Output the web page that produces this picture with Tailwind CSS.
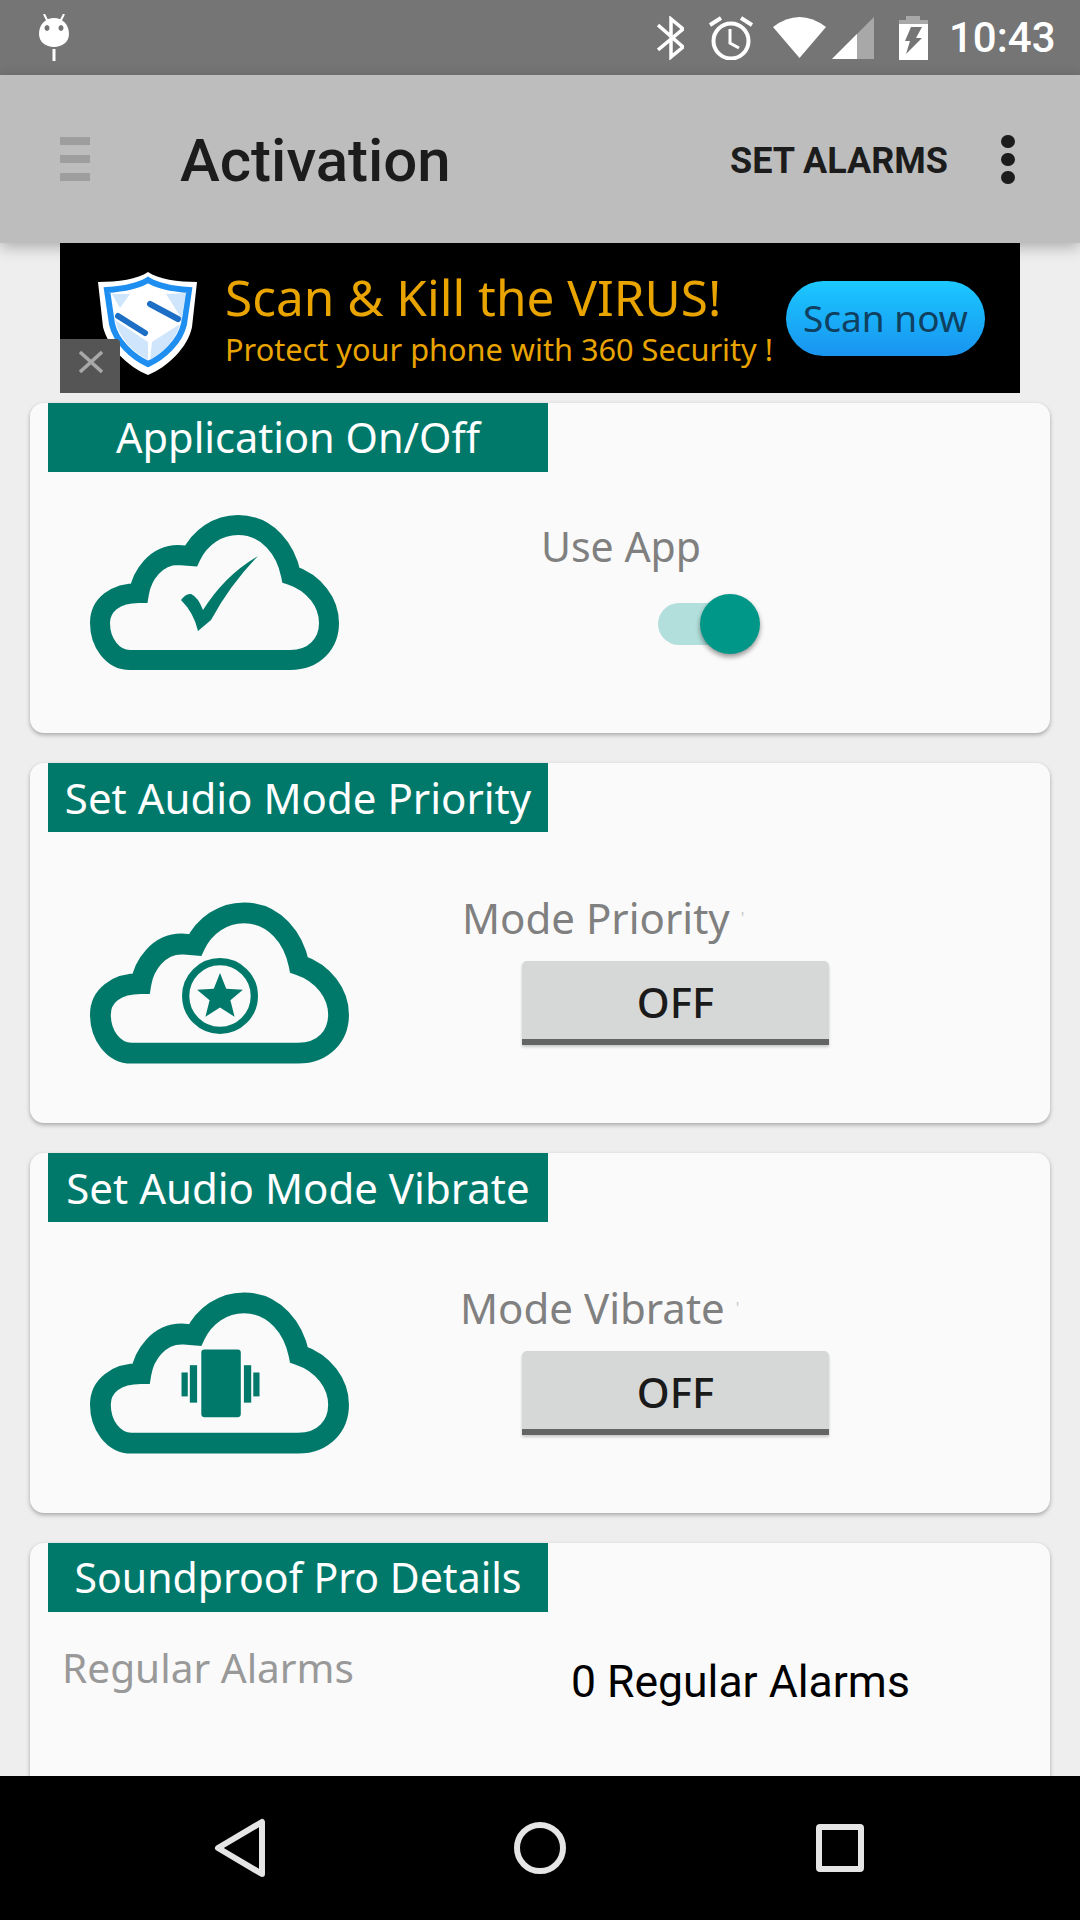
<!DOCTYPE html>
<html lang="en">
<head>
<meta charset="UTF-8">
<title>Activation</title>
<script src="https://cdn.jsdelivr.net/npm/@tailwindcss/browser@4"></script>
</head>
<body class="bg-[#eeeeee] font-['Roboto',sans-serif]">
<div class="w-[1080px] h-[1920px] flex flex-col overflow-hidden">

  <!-- status bar -->
  <div class="h-[75px] shrink-0 bg-[#757575] flex items-center text-white">
    <svg class="ml-[37px] w-[34px] h-[48px]" viewBox="0 0 34 48" fill="#fff">
      <path d="M7 0l4 8M27 0l-4 8" stroke="#fff" stroke-width="2" />
      <path fill-rule="evenodd" d="M17 4C25 4 32 10 32 20C32 28 25 33 17 33C9 33 2 28 2 20C2 10 9 4 17 4ZM10 11a2.500 3 0 1 0 .01 0ZM24 11a2.500 3 0 1 0 .01 0Z" />
      <rect x="15.500" y="35" width="3" height="12" />
    </svg>
    <svg class="ml-[586px] w-[27px] h-[44px]" viewBox="0 0 27 44" fill="none" stroke="#fff" stroke-width="3.500">
      <path d="M1 9L26 31L14 41V3L26 13L1 34" />
    </svg>
    <svg class="ml-[25px] w-[44px] h-[44px]" viewBox="0 0 44 44" fill="none" stroke="#fff" stroke-width="4">
      <circle cx="22" cy="25" r="17.500" />
      <path d="M21 13V27L30 32" stroke-width="3" />
      <path d="M1 9L12 2M43 9L32 2" />
    </svg>
    <svg class="ml-[20px] w-[53px] h-[41px]" viewBox="0 0 53 41" fill="#fff">
      <path d="M0 10Q26.500 -10 53 10L26.500 41Z" />
    </svg>
    <svg class="ml-[6px] w-[42px] h-[42px]" viewBox="0 0 42 42">
      <path d="M0 42L42 0V42Z" fill="#a8a8a8" />
      <path d="M0 42L25 17V42Z" fill="#fff" />
    </svg>
    <svg class="ml-[25px] w-[29px] h-[44px]" viewBox="0 0 29 44">
      <path d="M7 0H21V4H29V8H0V4H7Z" fill="#a8a8a8" />
      <path fill-rule="evenodd" d="M0 8H29V44H0ZM12 11L6 25H11L7 38L23 22H17L23 11Z" fill="#fff" />
    </svg>
    <span class="ml-[21px] text-[42px] leading-none font-medium">10:43</span>
  </div>

  <!-- action bar -->
  <div class="h-[168px] shrink-0 bg-[#bdbdbd] flex items-center relative z-10 shadow-[0_4px_14px_rgba(0,0,0,0.28)]">
    <div class="ml-[60px] w-[30px] flex flex-col gap-[10px]">
      <div class="h-[8px] bg-[#9e9e9e]"></div>
      <div class="h-[8px] bg-[#9e9e9e]"></div>
      <div class="h-[8px] bg-[#9e9e9e]"></div>
    </div>
    <div class="ml-[90px] pt-[4px] text-[60px] leading-none font-medium text-[#1c1c1c]">Activation</div>
    <div class="ml-auto pt-[4px] text-[36px] leading-none font-bold text-[#1c1c1c]">SET ALARMS</div>
    <div class="ml-[53px] mr-[65px] w-[14px] flex flex-col gap-[5px]">
      <div class="h-[13px] rounded-full bg-[#1c1c1c]"></div>
      <div class="h-[13px] rounded-full bg-[#1c1c1c]"></div>
      <div class="h-[13px] rounded-full bg-[#1c1c1c]"></div>
    </div>
  </div>

  <main class="flex-1 overflow-hidden flex flex-col">
    <!-- ad -->
    <div class="relative z-20 mx-[60px] h-[150px] shrink-0 bg-black flex items-center">
      <svg class="ml-[38px] mt-[11px] w-[99px] h-[103px]" viewBox="0 0 99 103">
        <path d="M50 0C60 7 80 10 99 10L94 55C90 75 70 95 50 103C30 95 10 75 5 55L0 10C20 10 40 7 50 0Z" fill="#fff" />
        <path d="M50 8C60 14 75 17 91 18L86 52C82 70 65 85 50 92C35 85 18 70 14 52L9 18C25 17 40 14 50 8Z" fill="#fff" stroke="#1e8ef0" stroke-width="6" />
        <path d="M68 22L88 21L84 47ZM17 48L50 70L50 88C35 80 22 68 17 48ZM52 88L54 70L82 52C78 68 66 80 52 88ZM14 22L32 22L22 36Z" fill="#cfe5fb" />
        <path d="M20 44L47 61M52 32L80 47" stroke="#1c6fc4" stroke-width="6" fill="none" stroke-linecap="round" />
      </svg>
      <div class="ml-[28px] w-[561px] text-[#e9a400] font-['Noto_Sans',sans-serif]">
        <div class="text-[49.500px] leading-[58px]">Scan &amp; Kill the VIRUS!</div>
        <div class="text-[30.700px] leading-[38px] mt-[4px]">Protect your phone with 360 Security !</div>
      </div>
      <div class="w-[199px] h-[75px] rounded-full bg-linear-to-b from-[#1cc8ff] to-[#1a94f0] flex items-center justify-center text-[37px] text-[#10405f] font-['Noto_Sans',sans-serif]">Scan now</div>
      <div class="absolute left-0 bottom-0 w-[60px] h-[54px] bg-[#555555] rounded-tr-sm">
        <svg class="ml-[19px] mt-[12px] w-[24px] h-[22px]" viewBox="0 0 24 22" fill="none" stroke="#a8a8a8" stroke-width="3.500">
          <path d="M1 1L23 21M23 1L1 21" />
        </svg>
      </div>
    </div>

    <!-- application on/off -->
    <section class="mt-[10px] mx-[30px] h-[330px] shrink-0 rounded-[14px] bg-[#fafafa] shadow-[0_2px_4px_rgba(0,0,0,0.3)]">
      <div class="ml-[18px] w-[500px] h-[69px] bg-[#00796b] flex items-center justify-center text-white text-[41.500px] font-['Noto_Sans',sans-serif]">Application On/Off</div>
      <div class="flex">
        <svg class="ml-[60px] mt-[43px] w-[250px] h-[155px]" viewBox="0 0 250 155">
          <path d="M40 145C22 145 10 127 10 108C10 90 25 78 49 78C52 60 66 40 88 40L101 41C110 22 128 10 148 10C178 10 196 35 201 60C225 68 239 88 239 108C239 128 225 145 200 145Z" fill="none" stroke="#00796b" stroke-width="20" />
          <path d="M91 85Q96 78 101 79Q108 82 113 95Q135 60 168 41Q140 70 121 105L108 116Q104 98 91 85Z" fill="#00796b" />
        </svg>
        <div class="ml-[201px] mt-[48px] font-['Noto_Sans',sans-serif]">
          <div class="text-[41px] leading-[52px] text-[#808080]">Use App</div>
          <div class="ml-[117px] mt-[22px] w-[102px] h-[60px] relative">
            <div class="absolute left-0 top-[9px] w-[90px] h-[42px] rounded-full bg-[#b2dfdb]"></div>
            <div class="absolute right-0 top-0 w-[60px] h-[60px] rounded-full bg-[#009688] shadow-[0_3px_5px_rgba(0,0,0,0.4)]"></div>
          </div>
        </div>
      </div>
    </section>

    <!-- audio mode priority -->
    <section class="mt-[30px] mx-[30px] h-[360px] shrink-0 rounded-[14px] bg-[#fafafa] shadow-[0_2px_4px_rgba(0,0,0,0.3)]">
      <div class="ml-[18px] w-[500px] h-[69px] bg-[#00796b] flex items-center justify-center text-white text-[42px] font-['Noto_Sans',sans-serif]">Set Audio Mode Priority</div>
      <div class="flex">
        <svg class="ml-[60px] mt-[70px] w-[260px] h-[162px]" viewBox="0 0 250 155">
          <path d="M40 145C22 145 10 127 10 108C10 90 25 78 49 78C52 60 66 40 88 40L101 41C110 22 128 10 148 10C178 10 196 35 201 60C225 68 239 88 239 108C239 128 225 145 200 145Z" fill="none" stroke="#00796b" stroke-width="20" />
          <circle cx="125" cy="90" r="33" fill="none" stroke="#00796b" stroke-width="7" />
          <path d="M125 68L131 83L147 84L135 94L139 110L125 101L111 110L115 94L103 84L119 83Z" fill="#00796b" />
        </svg>
        <div class="ml-[112px] mt-[60px] font-['Noto_Sans',sans-serif]">
          <div class="text-[42px] leading-[52px] text-[#808080] whitespace-nowrap">Mode Priority <span class="text-[#c8c8c8] text-[16px] align-top">'</span></div>
          <div class="ml-[60px] mt-[17px] w-[307px] h-[84px] pt-[3px] rounded-t-[5px] bg-[#d6d7d7] border-b-[6px] border-[#636564] shadow-[0_2px_3px_rgba(0,0,0,0.2)] flex items-center justify-center text-[42px] font-medium text-[#1a1a1a]">OFF</div>
        </div>
      </div>
    </section>

    <!-- audio mode vibrate -->
    <section class="mt-[30px] mx-[30px] h-[360px] shrink-0 rounded-[14px] bg-[#fafafa] shadow-[0_2px_4px_rgba(0,0,0,0.3)]">
      <div class="ml-[18px] w-[500px] h-[69px] bg-[#00796b] flex items-center justify-center text-white text-[42px] font-['Noto_Sans',sans-serif]">Set Audio Mode Vibrate</div>
      <div class="flex">
        <svg class="ml-[60px] mt-[70px] w-[260px] h-[162px]" viewBox="0 0 250 155" fill="#00796b">
          <path d="M40 145C22 145 10 127 10 108C10 90 25 78 49 78C52 60 66 40 88 40L101 41C110 22 128 10 148 10C178 10 196 35 201 60C225 68 239 88 239 108C239 128 225 145 200 145Z" fill="none" stroke="#00796b" stroke-width="20" />
          <rect x="107" y="55" width="38" height="65" rx="3" />
          <rect x="96" y="70" width="7" height="36" />
          <rect x="88" y="77" width="6" height="23" />
          <rect x="148" y="70" width="7" height="36" />
          <rect x="157" y="77" width="6" height="23" />
        </svg>
        <div class="ml-[110px] mt-[60px] font-['Noto_Sans',sans-serif]">
          <div class="text-[42px] leading-[52px] text-[#808080] whitespace-nowrap">Mode Vibrate <span class="text-[#c8c8c8] text-[16px] align-top">'</span></div>
          <div class="ml-[62px] mt-[17px] w-[307px] h-[84px] pt-[3px] rounded-t-[5px] bg-[#d6d7d7] border-b-[6px] border-[#636564] shadow-[0_2px_3px_rgba(0,0,0,0.2)] flex items-center justify-center text-[42px] font-medium text-[#1a1a1a]">OFF</div>
        </div>
      </div>
    </section>

    <!-- details -->
    <section class="mt-[30px] mx-[30px] h-[300px] shrink-0 rounded-[14px] bg-[#fafafa] shadow-[0_2px_4px_rgba(0,0,0,0.3)]">
      <div class="ml-[18px] w-[500px] h-[69px] bg-[#00796b] flex items-center justify-center text-white text-[41px] font-['Noto_Sans',sans-serif]">Soundproof Pro Details</div>
      <div class="flex">
        <div class="ml-[32px] mt-[30px] w-[509px] text-[40.600px] leading-[52px] text-[#999999] font-['Noto_Sans',sans-serif]">Regular Alarms</div>
        <div class="mt-[42px] text-[44.500px] leading-[56px] text-black">0 Regular Alarms</div>
      </div>
    </section>
  </main>

  <!-- navigation bar -->
  <nav class="h-[144px] shrink-0 bg-black flex items-center">
    <svg class="ml-[214px] w-[52px] h-[60px]" viewBox="0 0 52 60" fill="none" stroke="#e5e5e5" stroke-width="6" stroke-linejoin="round">
      <path d="M48 4V56L4 30Z" />
    </svg>
    <svg class="ml-[248px] w-[52px] h-[52px]" viewBox="0 0 52 52" fill="none" stroke="#e5e5e5" stroke-width="6">
      <circle cx="26" cy="26" r="23" />
    </svg>
    <svg class="ml-[250px] w-[48px] h-[48px]" viewBox="0 0 48 48" fill="none" stroke="#e5e5e5" stroke-width="6" stroke-linejoin="round">
      <rect x="3" y="3" width="42" height="42" rx="1" />
    </svg>
  </nav>
</div>
</body>
</html>
